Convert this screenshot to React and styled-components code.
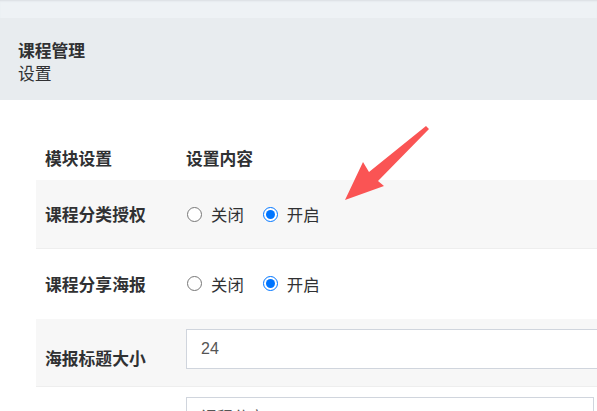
import React from "react";
import styled, { createGlobalStyle } from "styled-components";

const Global = createGlobalStyle`
  html, body { margin: 0; padding: 0; background: #fff; overflow: hidden; }
  body { font-family: "Noto Sans CJK SC", "Noto Sans", sans-serif; color: #303133; }
  * { box-sizing: border-box; }
`;

const Page = styled.div`
  position: relative;
  width: 597px;
  height: 411px;
  overflow: hidden;
`;

const TopBand = styled.div`
  height: 18px;
  background: #eef2f5;
  box-shadow: inset 0 2px 2px -1px #d9dde2;
`;

const PageHeader = styled.div`
  height: 82px;
  background: #e8ecef;
  padding: 20px 0 0 18px;
  display: flex;
  flex-direction: column;
`;

const Title = styled.div`
  font-size: 16.8px;
  font-weight: 700;
  line-height: 24px;
  color: #303133;
`;

const Sub = styled.div`
  font-size: 16.8px;
  line-height: 23px;
  color: #303133;
`;

const Content = styled.div`
  padding: 36px 0 0 36px;
`;

const Table = styled.div`
  width: 640px;
  display: flex;
  flex-direction: column;
`;

const Row = styled.div`
  display: grid;
  grid-template-columns: 150px 1fr;
  height: ${(p) => p.$h}px;
  align-items: ${(p) => (p.$top ? "start" : "center")};
  padding-top: ${(p) => (p.$top ? p.$top : 0)}px;
  background: ${(p) => (p.$alt ? "#f7f7f7" : "#fff")};
  border-bottom: 1px solid ${(p) => (p.$alt ? "#eeeeee" : "transparent")};
`;

const Label = styled.div`
  padding-left: ${(p) => (p.$flush ? 0 : 9)}px;
  font-size: 16.8px;
  font-weight: 700;
  color: #303133;
  line-height: 24px;
  align-self: center;
`;

const Cell = styled.div`
  display: flex;
  align-items: center;
`;

const RadioLabel = styled.label`
  display: flex;
  align-items: center;
  font-size: 16.4px;
  color: #303133;
  margin-right: 18px;
  line-height: 24px;
  input {
    width: 15px;
    height: 15px;
    margin: 0 9px 0 1px;
  }
`;

const TextInput = styled.input`
  width: ${(p) => p.$w}px;
  height: 40px;
  border: 1px solid #d0d5dd;
  border-radius: 0;
  padding: 0 14px;
  font-family: "Liberation Sans", "Noto Sans CJK SC", sans-serif;
  font-size: 16px;
  color: #555;
  background: #fff;
  outline: none;
`;

const TextArea = styled.textarea`
  width: 408px;
  height: 80px;
  border: 1px solid #d0d5dd;
  border-radius: 0;
  padding: 6px 14px;
  font-family: "Noto Sans CJK SC", sans-serif;
  font-size: 16px;
  line-height: 24px;
  color: #555;
  background: #fff;
  resize: none;
  outline: none;
  overflow: hidden;
`;

const Arrow = styled.svg`
  position: absolute;
  left: 0;
  top: 0;
  pointer-events: none;
`;

function Radios({ name }) {
  return (
    <Cell>
      <RadioLabel>
        <input type="radio" name={name} readOnly />
        关闭
      </RadioLabel>
      <RadioLabel>
        <input type="radio" name={name} defaultChecked />
        开启
      </RadioLabel>
    </Cell>
  );
}

export default function App() {
  return (
    <>
      <Global />
      <Page>
        <TopBand />
        <PageHeader>
          <Title>课程管理</Title>
          <Sub>设置</Sub>
        </PageHeader>
        <Content>
          <Table>
            <Row $h={44}>
              <Label>模块设置</Label>
              <Label $flush>设置内容</Label>
            </Row>
            <Row $h={69} $alt>
              <Label>课程分类授权</Label>
              <Radios name="a" />
            </Row>
            <Row $h={70}>
              <Label>课程分享海报</Label>
              <Radios name="b" />
            </Row>
            <Row $h={68} $alt $top={10}>
              <Label>海报标题大小</Label>
              <Cell>
                <TextInput $w={430} defaultValue="24" />
              </Cell>
            </Row>
            <Row $h={100} $top={10}>
              <Label />
              <Cell>
                <TextArea defaultValue="课程分享" />
              </Cell>
            </Row>
          </Table>
        </Content>
        <Arrow width="597" height="411" viewBox="0 0 597 411">
          <polygon
            points="345,200 363,162 369,172 426,126 429,129 378,181 384,186"
            fill="#fa5454"
          />
        </Arrow>
      </Page>
    </>
  );
}
